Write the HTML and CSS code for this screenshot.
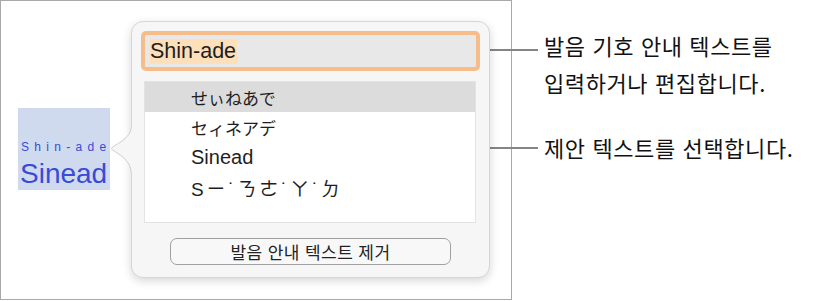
FILE: index.html
```html
<!DOCTYPE html>
<html lang="ko">
<head>
<meta charset="utf-8">
<title>발음 안내 텍스트</title>
<link rel="stylesheet" href="styles.css">
</head>
<body>
<div class="page">
  <div class="frame">
    <div class="ruby-sample">
      <div class="ruby-top">Shin-ade</div>
      <div class="ruby-base">Sinead</div>
    </div>
    <div class="popover">
      <svg class="arrow" width="24" height="44" viewBox="0 0 24 44" aria-hidden="true">
        <path class="arrow-fill" d="M24,0 L21,0 C21,8 11,14 2.5,19 Q0.5,20.5 2.5,22 C11,27 21,34 21,44 L24,44 Z"/>
        <path class="arrow-edge" d="M21,0 C21,8 11,14 2.5,19 Q0.5,20.5 2.5,22 C11,27 21,34 21,44"/>
      </svg>
      <div class="field"><span class="field-text">Shin-ade</span></div>
      <ul class="list">
        <li class="row selected cjk">せぃねあで</li>
        <li class="row cjk">セィネアデ</li>
        <li class="row">Sinead</li>
        <li class="row bopo">Sㄧ˙ㄋㄜ˙ㄚ˙ㄉ</li>
      </ul>
      <div class="btn-wrap"><button class="btn" type="button">발음 안내 텍스트 제거</button></div>
    </div>
  </div>
  <div class="callouts">
    <div class="callout c1"><span class="line"></span><p class="label">발음 기호 안내 텍스트를<br>입력하거나 편집합니다.</p></div>
    <div class="callout c2"><span class="line"></span><p class="label">제안 텍스트를 선택합니다.</p></div>
  </div>
</div>
</body>
</html>
```

FILE: styles.css
```css
* { box-sizing: border-box; }
html, body {
  margin: 0;
  padding: 0;
  background: #ffffff;
}
body {
  font-family: "Liberation Sans", "Noto Sans CJK KR", sans-serif;
  color: #1e1e1e;
}
.page {
  display: flex;
  align-items: flex-start;
  width: 817px;
  height: 301px;
  overflow: hidden;
}
.frame {
  flex: none;
  width: 512px;
  height: 300px;
  border: 1px solid #a9a9a9;
  display: flex;
  align-items: flex-start;
  padding: 20px 0 0 17px;
  gap: 21px;
}
.ruby-sample {
  flex: none;
  width: 92px;
  height: 82px;
  margin-top: 87px;
  background: #cfdaef;
  display: flex;
  flex-direction: column;
  color: #3a4ad6;
  font-family: "Liberation Sans", sans-serif;
}
.ruby-top {
  margin-top: 32px;
  padding-left: 3px;
  font-size: 12px;
  line-height: 14px;
  letter-spacing: 5.3px;
  white-space: nowrap;
}
.ruby-base {
  margin-top: 4px;
  padding-left: 2px;
  font-size: 28px;
  line-height: 32px;
  white-space: nowrap;
}
.popover {
  position: relative;
  flex: none;
  width: 359px;
  background: #f6f6f6;
  border: 1px solid #d6d6d6;
  border-radius: 12px;
  box-shadow: 0 3px 10px rgba(0, 0, 0, 0.16);
  padding: 9px;
  display: flex;
  flex-direction: column;
}
.arrow {
  position: absolute;
  left: -22px;
  top: 106px;
  overflow: visible;
}
.arrow-fill { fill: #f6f6f6; stroke: none; }
.arrow-edge { fill: none; stroke: #cfcfcf; stroke-width: 1; }
.field {
  height: 40px;
  border: 4px solid #f6bd8b;
  border-radius: 5px;
  background: #e8e8e8;
  display: flex;
  align-items: center;
  padding-left: 5px;
}
.field-text {
  background: #fddfba;
  font-family: "Liberation Sans", sans-serif;
  font-size: 21.5px;
  line-height: 25px;
  color: #1e1e1e;
  padding-right: 1px;
}
.list {
  list-style: none;
  margin: 10px 4px 0 3px;
  padding: 0;
  height: 142px;
  background: #ffffff;
  border: 1px solid #e3e3e3;
}
.row {
  height: 30px;
  padding-left: 46px;
  display: flex;
  align-items: center;
  font-family: "Liberation Sans", "Noto Sans CJK JP", sans-serif;
  font-size: 20px;
  color: #1e1e1e;
  white-space: nowrap;
}
.row.cjk {
  font-family: "Noto Sans CJK JP", sans-serif;
  font-size: 17px;
}
.row.bopo {
  font-family: "Liberation Sans", "Noto Sans CJK TC", sans-serif;
  font-size: 19px;
  letter-spacing: 2.8px;
}
.row.selected {
  background: #dcdcdc;
}
.btn-wrap {
  display: flex;
  justify-content: center;
  padding-top: 15px;
  padding-bottom: 3px;
}
.btn {
  width: 281px;
  height: 27px;
  border: 1.5px solid #a0a0a0;
  border-radius: 7px;
  background: #f8f8f8;
  font-family: "Noto Sans CJK KR", sans-serif;
  font-size: 17px;
  letter-spacing: 0.4px;
  line-height: 22px;
  color: #222222;
  padding: 0;
}
.callouts {
  flex: none;
  margin-left: -35px;
  display: flex;
  flex-direction: column;
}
.callout {
  display: flex;
  align-items: flex-start;
  gap: 6px;
}
.c1 { margin-top: 27px; }
.c2 { margin-top: 28px; }
.line {
  flex: none;
  height: 2px;
  background: #858585;
}
.c1 .line { width: 58px; margin-left: 3px; margin-top: 22px; }
.c2 .line { width: 61px; margin-top: 18px; }
.label {
  margin: 0;
  font-family: "Noto Sans CJK KR", sans-serif;
  font-size: 22px;
  letter-spacing: 0.6px;
  line-height: 37px;
  color: #111111;
  white-space: nowrap;
}
```
